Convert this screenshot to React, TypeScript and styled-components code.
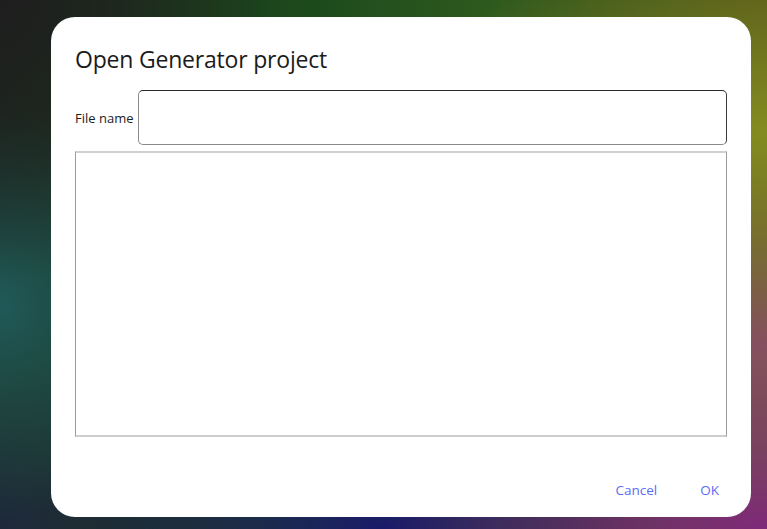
import styled, { createGlobalStyle } from 'styled-components'

const GlobalStyle = createGlobalStyle`
  html,
  body {
    margin: 0;
    padding: 0;
    font-family: 'Open Sans', 'Noto Sans', sans-serif;
  }

  * {
    box-sizing: border-box;
  }
`

const Backdrop = styled.div`
  width: 100vw;
  height: 100vh;
  overflow: hidden;
  padding: 17px 16px 12px 51px;
  display: flex;
  background:
    radial-gradient(circle at 0% 0%, #1e1e1e 0%, rgba(30, 30, 30, 0) 30%),
    radial-gradient(ellipse 45% 40% at 100% 25%, #858c20 0%, rgba(133, 140, 32, 0) 100%),
    radial-gradient(ellipse 40% 45% at 100% 65%, #855060 0%, rgba(133, 80, 96, 0) 100%),
    radial-gradient(ellipse 50% 45% at 100% 100%, #7d1d82 0%, rgba(125, 29, 130, 0) 100%),
    radial-gradient(ellipse 40% 30% at 50% 100%, #1a1a6a 0%, rgba(26, 26, 106, 0) 100%),
    radial-gradient(ellipse 25% 40% at 0% 58%, #1f5a58 0%, rgba(31, 90, 88, 0) 100%),
    radial-gradient(ellipse 35% 30% at 0% 100%, #1e2a3c 0%, rgba(30, 42, 60, 0) 100%),
    linear-gradient(90deg, #1d2a1e 0%, #1c4a1c 40%, #2f5a1e 65%, #4d4f1a 100%);
`

const Dialog = styled.div`
  flex: 1;
  background: #ffffff;
  border-radius: 24px;
  padding: 24px 24px 10px 24px;
  display: flex;
  flex-direction: column;
`

const Title = styled.h1`
  margin: 0;
  font-family: 'Open Sans', 'Noto Sans', sans-serif;
  font-weight: 400;
  font-size: 23px;
  line-height: 36px;
  color: #1b1b1b;
  letter-spacing: -0.2px;
`

const FieldRow = styled.div`
  display: flex;
  align-items: center;
  gap: 5px;
  margin-top: 13px;
`

const Label = styled.label`
  font-size: 13px;
  color: #1b1b1b;
`

const TextInput = styled.input`
  flex: 1;
  height: 55px;
  border: 1px solid #8a8a8a;
  border-top-color: #2a2a2a;
  border-right-color: #3a3a3a;
  border-radius: 5px;
  padding: 0 10px;
  font-size: 14px;
  outline: none;
  background: #fff;
`

const FileList = styled.div`
  margin-top: 6px;
  height: 286px;
  border: 1px solid #9a9a9a;
  border-top: 2px solid #d0d0d0;
  border-bottom: 2px solid #cdcdcd;
  background: #fff;
`

const Actions = styled.div`
  margin-top: auto;
  display: flex;
  justify-content: flex-end;
  gap: 27px;
`

const ActionButton = styled.button`
  border: none;
  background: transparent;
  font-family: 'Open Sans', 'Noto Sans', sans-serif;
  font-size: 13.5px;
  color: #5a6df6;
  padding: 8px 8px;
  cursor: pointer;
`

export const App = (): JSX.Element => {
  return (
    <Backdrop>
      <GlobalStyle />
      <Dialog>
        <Title>Open Generator project</Title>
        <FieldRow>
          <Label htmlFor="file-name">File name</Label>
          <TextInput id="file-name" />
        </FieldRow>
        <FileList />
        <Actions>
          <ActionButton>Cancel</ActionButton>
          <ActionButton>OK</ActionButton>
        </Actions>
      </Dialog>
    </Backdrop>
  )
}

export default App
